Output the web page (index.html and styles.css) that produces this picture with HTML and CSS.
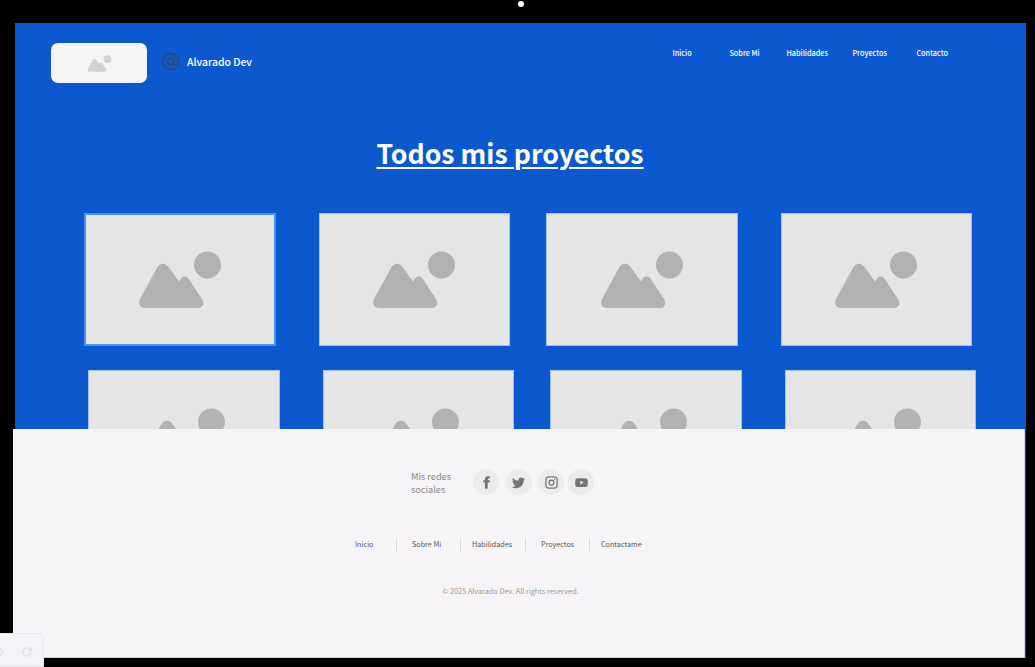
FILE: index.html
```html
<!DOCTYPE html>
<html>
<head>
    <title>Alvarado Dev - Proyectos</title>
    <link rel="stylesheet" href="styles.css">
</head>
<body>
    <span class="camera"></span>
    <div class="frame">
        <main class="hero">
            <header class="topbar">
                <div class="logo-box">
                    <svg class="logo-pic" viewBox="0 0 84 58"><use href="#pic"></use></svg>
                </div>
                <svg class="at-icon" viewBox="0 0 24 24" fill="none" stroke="currentColor" stroke-width="2.800">
                    <circle cx="12" cy="12" r="4"></circle>
                    <path d="M16 8v5a3 3 0 0 0 6 0v-1a10 10 0 1 0-3.920 7.940"></path>
                </svg>
                <span class="brand">Alvarado Dev</span>
                <nav class="nav">
                    <a class="nav-link nav-inicio">Inicio</a>
                    <a class="nav-link nav-sobre">Sobre Mi</a>
                    <a class="nav-link nav-habilidades">Habilidades</a>
                    <a class="nav-link nav-proyectos">Proyectos</a>
                    <a class="nav-link">Contacto</a>
                </nav>
            </header>

            <h1 class="title">Todos mis proyectos</h1>

            <div class="cards">
                <div class="card card-active"><svg class="pic" viewBox="0 0 84 58"><use href="#pic"></use></svg></div>
                <div class="card"><svg class="pic" viewBox="0 0 84 58"><use href="#pic"></use></svg></div>
                <div class="card"><svg class="pic" viewBox="0 0 84 58"><use href="#pic"></use></svg></div>
                <div class="card"><svg class="pic" viewBox="0 0 84 58"><use href="#pic"></use></svg></div>
            </div>
            <div class="cards cards-second">
                <div class="card"><svg class="pic" viewBox="0 0 84 58"><use href="#pic"></use></svg></div>
                <div class="card"><svg class="pic" viewBox="0 0 84 58"><use href="#pic"></use></svg></div>
                <div class="card"><svg class="pic" viewBox="0 0 84 58"><use href="#pic"></use></svg></div>
                <div class="card"><svg class="pic" viewBox="0 0 84 58"><use href="#pic"></use></svg></div>
            </div>
        </main>

        <footer class="footer">
            <div class="social">
                <p class="social-label">Mis redes sociales</p>
                <a class="social-btn">
                    <svg viewBox="0 0 24 24" fill="currentColor"><path d="M14 8.500V6.500c0-.9.600-1.100 1-1.100h2.500V2H14c-3.300 0-4.500 2.400-4.500 4.500v2H7V12h2.500v10H14V12h3l.5-3.500z"></path></svg>
                </a>
                <a class="social-btn">
                    <svg viewBox="0 0 24 24" fill="currentColor"><path d="M22.460 6c-.77.350-1.600.580-2.460.690.880-.530 1.560-1.370 1.880-2.380-.830.500-1.750.850-2.720 1.050C18.370 4.500 17.260 4 16 4c-2.350 0-4.270 1.920-4.270 4.290 0 .340.040.670.110.980C8.280 9.090 5.110 7.380 3 4.790c-.370.630-.580 1.370-.580 2.150 0 1.490.750 2.810 1.910 3.560-.710 0-1.370-.2-1.950-.5v.030c0 2.080 1.480 3.820 3.440 4.210a4.220 4.220 0 0 1-1.930.070 4.280 4.280 0 0 0 4 2.980 8.521 8.521 0 0 1-5.330 1.840c-.340 0-.680-.020-1.020-.060C3.440 20.290 5.700 21 8.120 21 16 21 20.330 14.460 20.330 8.790c0-.190 0-.370-.010-.560.840-.6 1.560-1.360 2.140-2.230z"></path></svg>
                </a>
                <a class="social-btn">
                    <svg viewBox="0 0 24 24" fill="none" stroke="currentColor" stroke-width="2">
                        <rect x="3" y="3" width="18" height="18" rx="5"></rect>
                        <circle cx="12" cy="12" r="4"></circle>
                        <circle cx="17" cy="7" r="1" fill="currentColor" stroke="none"></circle>
                    </svg>
                </a>
                <a class="social-btn">
                    <svg viewBox="0 0 24 24" fill="currentColor"><path fill-rule="evenodd" d="M6 5h12a4 4 0 0 1 4 4v6a4 4 0 0 1-4 4H6a4 4 0 0 1-4-4V9a4 4 0 0 1 4-4zm4 4v6l5.500-3z"></path></svg>
                </a>
            </div>

            <nav class="footer-nav">
                <a class="footer-link link-inicio">Inicio</a>
                <a class="footer-link link-sobre">Sobre Mi</a>
                <a class="footer-link link-habilidades">Habilidades</a>
                <a class="footer-link link-proyectos">Proyectos</a>
                <a class="footer-link link-contacto">Contactame</a>
            </nav>

            <p class="copyright">© 2025 Alvarado Dev. All rights reserved.</p>
        </footer>
    </div>

    <div class="widget">
        <svg class="widget-icon widget-undo" viewBox="0 0 24 24" fill="none" stroke="currentColor" stroke-width="2">
            <path d="M5 12a7 7 0 1 0 2.200-5.100L4 9.500"></path>
            <path d="M4 4v5.500h5.500"></path>
        </svg>
        <svg class="widget-icon" viewBox="0 0 24 24" fill="none" stroke="currentColor" stroke-width="2">
            <path d="M19 12a7 7 0 1 1-2.200-5.100L20 9.500"></path>
            <path d="M20 4v5.500h-5.500"></path>
        </svg>
    </div>

    <svg class="defs" width="0" height="0">
        <symbol id="pic" viewBox="0 0 84 58">
            <circle cx="69.500" cy="14" r="13.500"></circle>
            <path d="M7 57C2 57-.5 52.500 2 48L19.500 16C22 11.500 28 11.500 30.500 16L41 30.500 43 27.500C45 24.500 48 24.500 50.500 27.500L64 48C67 52.500 64.500 57 60 57Z"></path>
        </symbol>
    </svg>
</body>
</html>
```

FILE: styles.css
```css
html, body {
    margin: 0;
    height: 667px;
    overflow: hidden;
}
body {
    background-color: #000;
    font-family: "Noto Sans CJK SC", "Noto Sans", sans-serif;
    position: relative;
}
a {
    color: inherit;
}
p, h1 {
    margin: 0;
}

/* device chrome */
.camera {
    position: absolute;
    top: 1px;
    left: 518px;
    width: 6px;
    height: 6px;
    border-radius: 50%;
    background-color: #fff;
}
.frame {
    width: 1012px;
    margin-left: 13px;
    padding-top: 23px;
}
.widget {
    position: absolute;
    left: -20px;
    bottom: 0;
    width: 64px;
    height: 34px;
    display: flex;
    align-items: center;
    justify-content: flex-end;
    box-sizing: border-box;
    background-color: #f3f4f8;
    border: 1px solid #e7e7ee;
    border-radius: 6px 6px 0 0;
    color: #dcdde2;
}
.widget-icon {
    width: 14px;
    height: 14px;
    margin-right: 9px;
    margin-top: 4px;
}
.widget-undo {
    margin-right: 15px;
}
.defs {
    position: absolute;
}

/* blue part */
.hero {
    height: 406px;
    margin-left: 2px;
    margin-right: -1px;
    background-color: #0c59cf;
    overflow: hidden;
    color: #fff;
}
.topbar {
    display: flex;
    align-items: center;
    height: 40px;
    padding: 20px 0 0 36px;
}
.logo-box {
    width: 96px;
    height: 40px;
    display: flex;
    align-items: center;
    justify-content: center;
    background-color: #f6f4f6;
    border-radius: 7px;
}
.logo-pic {
    width: 25px;
    height: 17px;
    fill: #d2d2d2;
}
.at-icon {
    width: 19px;
    height: 19px;
    margin-left: 14px;
    margin-top: -3px;
    color: #264a88;
}
.brand {
    margin-left: 7px;
    margin-top: -3px;
    font-size: 10.400px;
    line-height: 14px;
    font-weight: 500;
}
.nav {
    display: flex;
    margin-left: auto;
    margin-right: 78px;
    margin-top: -20px;
    font-size: 7.300px;
    line-height: 12px;
    font-weight: 500;
}
.nav-inicio { width: 57px; }
.nav-sobre { width: 57px; }
.nav-habilidades { width: 66px; }
.nav-proyectos { width: 64px; }

.title {
    margin-top: 52px;
    padding-right: 21px;
    text-align: center;
    font-size: 26.700px;
    line-height: 36px;
    font-weight: 700;
    text-decoration: underline;
    text-decoration-thickness: 2px;
    text-underline-offset: 3px;
}

.cards {
    display: grid;
    grid-template-columns: 234.500px 227.500px 234.500px 192px;
    margin-top: 42px;
    padding-left: 69px;
}
.cards-second {
    margin-top: 24px;
    padding-left: 73px;
}
.card {
    width: 191.500px;
    height: 133px;
    display: flex;
    align-items: center;
    justify-content: center;
    background-color: #e5e5e5;
    border: 1px solid #a5c2ec;
    box-sizing: border-box;
}
.card-active {
    border: 2px solid #4794ea;
}
.pic {
    width: 84px;
    height: 58px;
    fill: #b2b2b2;
}

/* footer */
.footer {
    height: 229px;
    background-color: #f6f4f6;
    box-sizing: border-box;
    border-bottom: 1px solid #c6d0e2;
    border-right: 1px solid #c6d0e2;
    box-shadow: 1px 0 0 #24406b;
    text-align: center;
}
.social {
    display: flex;
    align-items: center;
    padding: 40px 0 0 398px;
}
.social-label {
    width: 62px;
    height: 26px;
    padding-top: 1px;
    box-sizing: border-box;
    font-size: 9.200px;
    line-height: 13px;
    color: #858585;
    text-align: left;
}
.social-btn {
    width: 26px;
    height: 26px;
    margin-right: 6.500px;
    display: flex;
    align-items: center;
    justify-content: center;
    border-radius: 50%;
    background-color: #ececec;
    color: #747474;
}
.social-btn svg {
    width: 15px;
    height: 15px;
}
.social-btn:nth-child(4) {
    margin-right: 4px;
}
.footer-nav {
    display: flex;
    align-items: center;
    margin-top: 43px;
    padding-left: 342px;
    font-size: 7.200px;
    color: #555;
}
.footer-link {
    height: 13px;
    line-height: 13px;
    text-align: left;
}
.link-inicio {
    width: 41px;
}
.link-sobre,
.link-habilidades,
.link-proyectos,
.link-contacto {
    border-left: 1px solid #d9d9d9;
}
.link-sobre {
    width: 48px;
    padding-left: 15px;
}
.link-habilidades {
    width: 53px;
    padding-left: 11px;
}
.link-proyectos {
    width: 48px;
    padding-left: 15px;
}
.link-contacto {
    padding-left: 11px;
}
.copyright {
    margin-top: 34px;
    padding-right: 16px;
    font-size: 7.300px;
    line-height: 12px;
    color: #999;
}
```
